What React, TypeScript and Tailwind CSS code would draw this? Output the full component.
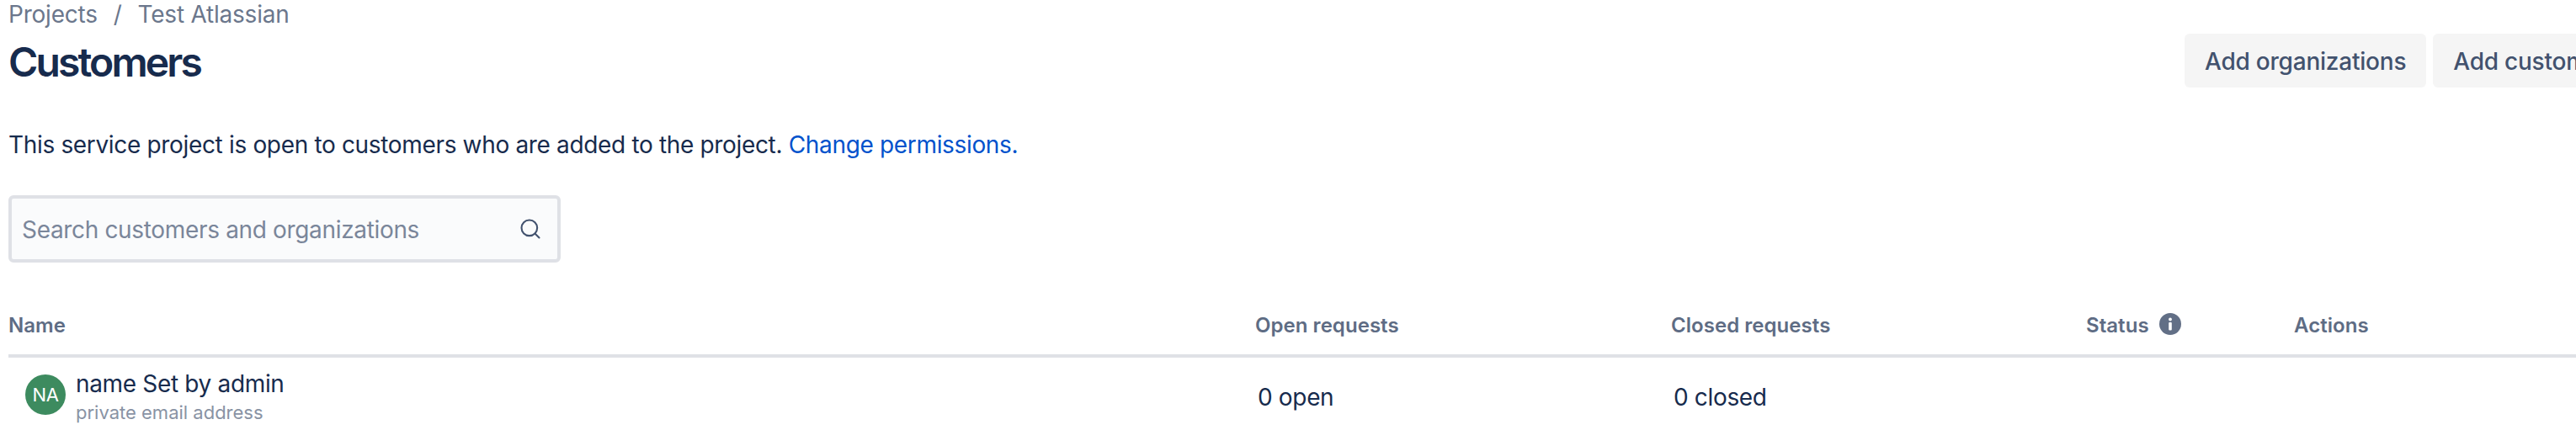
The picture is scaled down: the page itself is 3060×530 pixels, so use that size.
import { Search } from 'lucide-react';

const HEAD = 'text-[24px] leading-[32px] font-semibold tracking-[0.002em] text-[#5e6c84]';
const CELL = 'text-[28px] leading-[40px] tracking-[-0.012em] text-[#172b4d]';

function ActionButton({ label }: { label: string }) {
  return (
    <button className="h-[64px] shrink-0 rounded-[6px] bg-[#f5f5f5] px-[24px] pt-[2px] text-[28px] font-medium tracking-[-0.008em] whitespace-nowrap text-[#42526e]">
      {label}
    </button>
  );
}

export default function App() {
  return (
    <div className="h-[530px] w-[3060px] overflow-hidden bg-white pl-[10px] font-['Inter',sans-serif]">
      <div className="flex">
        <div className="w-[2585px] shrink-0">
          <div className="flex h-[32px] items-center gap-[19px] pt-[2px] text-[28px] leading-[32px] tracking-[-0.008em] text-[#6b778c]">
            <span>Projects</span>
            <span>/</span>
            <span>Test Atlassian</span>
          </div>
          <h1 className="mt-[8px] text-[48px] leading-[68px] font-semibold tracking-[-0.06em] text-[#172b4d]">Customers</h1>
        </div>
        <div className="flex shrink-0 gap-[8px] pt-[40px]">
          <ActionButton label="Add organizations" />
          <ActionButton label="Add customers" />
        </div>
      </div>

      <p className="mt-[44px] text-[28px] leading-[40px] tracking-[-0.012em] text-[#172b4d]">
        This service project is open to customers who are added to the project.{' '}
        <a className="text-[#0052cc]">Change permissions.</a>
      </p>

      <div className="mt-[40px] flex h-[80px] w-[656px] items-center justify-between rounded-[6px] border-[4px] border-[#dfe1e6] bg-[#fafbfc] pr-[18px] pl-[12px]">
        <span className="pt-[1px] text-[28px] tracking-[-0.012em] text-[#7a869a]">Search customers and organizations</span>
        <Search size={28} strokeWidth={1.8} className="text-[#42526e]" />
      </div>

      <div className="mt-[56px] grid h-[57px] grid-cols-[1481px_494px_493px_247px_1fr] items-start border-b-[4px] border-[#dfe1e6] pt-[3px]">
        <span className={HEAD}>Name</span>
        <span className={HEAD}>Open requests</span>
        <span className={HEAD}>Closed requests</span>
        <span className={`${HEAD} flex items-center gap-[12px]`}>
          Status
          <svg width="26" height="26" viewBox="0 0 26 26" className="-mt-[4px]">
            <circle cx="13" cy="13" r="13" fill="#626f86" />
            <circle cx="13" cy="7.5" r="1.9" fill="#fff" />
            <rect x="11.2" y="11" width="3.6" height="9.5" rx="1" fill="#fff" />
          </svg>
        </span>
        <span className={HEAD}>Actions</span>
      </div>

      <div className="grid grid-cols-[1481px_494px_493px] items-center pt-[13px]">
        <div className="flex items-start pl-[20px]">
          <div className="mt-[7px] flex h-[48px] w-[48px] items-center justify-center rounded-full bg-[#3d8b5f] text-[22px] tracking-[-0.02em] text-white">
            NA
          </div>
          <div className="ml-[12px]">
            <div className="text-[28px] leading-[36px] tracking-[-0.012em] text-[#172b4d]">name Set by admin</div>
            <div className="text-[22px] leading-[32px] text-[#8993a4]">private email address</div>
          </div>
        </div>
        <div className={`${CELL} pl-[3px]`}>0 open</div>
        <div className={`${CELL} pl-[3px]`}>0 closed</div>
      </div>
    </div>
  );
}
